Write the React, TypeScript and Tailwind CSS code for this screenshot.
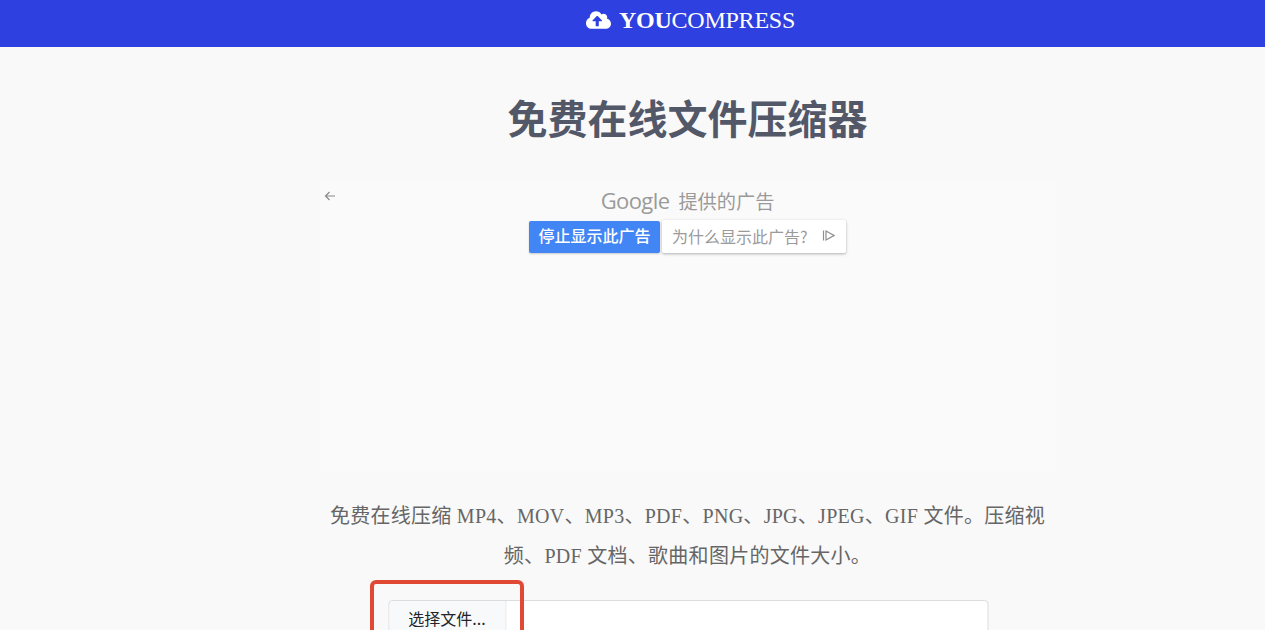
import React from "react";

const serif = "font-['Liberation_Serif','Noto_Sans_CJK_SC',serif]";
const sans = "font-['Noto_Sans_CJK_SC','Liberation_Sans',sans-serif]";

function CloudUpload() {
  return (
    <svg width="25" height="20" viewBox="0 0 640 512" fill="#fff" aria-hidden="true">
      <path d="M537.6 226.6c4.1-10.7 6.4-22.4 6.4-34.6 0-53-43-96-96-96-19.7 0-38.1 6-53.3 16.2C367 64.2 315.3 32 256 32c-88.4 0-160 71.6-160 160 0 2.7.1 5.4.2 8.1C40.2 219.8 0 273.2 0 336c0 79.5 64.5 144 144 144h368c70.7 0 128-57.3 128-128 0-61.9-44-113.6-102.4-125.4zM393.4 288H328v112c0 8.8-7.2 16-16 16h-48c-8.8 0-16-7.2-16-16V288h-65.4c-14.3 0-21.4-17.2-11.3-27.3l105.4-105.4c6.2-6.2 16.4-6.2 22.6 0l105.4 105.4c10.1 10.1 2.9 27.3-11.3 27.3z" />
    </svg>
  );
}

export default function App() {
  return (
    <div className="relative h-[630px] overflow-hidden bg-[#f9f9f9]">
      <header className="flex h-[47px] items-start justify-center bg-[#2f40e0] pl-[116px] pt-[7px]">
        <div className="flex items-center gap-[8px]">
          <CloudUpload />
          <span className={`${serif} text-[24px] leading-[26px] tracking-[-0.25px] text-white`}>
            <b>YOU</b>COMPRESS
          </span>
        </div>
      </header>

      <main className="ml-[320px] flex w-[735px] flex-col items-center">
        <h1 className={`${sans} mt-[42px] text-[40px] font-bold leading-[56px] text-[#535869]`}>
          免费在线文件压缩器
        </h1>

        <section className={`${sans} relative mt-[37px] flex h-[290px] w-full flex-col items-center bg-[#fafafa] pt-[5px]`}>
          <svg className="absolute left-[4px] top-[8px]" width="12" height="12" viewBox="0 0 12 12" fill="none" stroke="#8a8a8a" strokeWidth="1.2">
            <path d="M11 6H1.5M5.5 2 1.5 6l4 4" />
          </svg>
          <div className="flex h-[28px] items-center gap-[9px] text-[#9a9a9a]">
            <span className="mt-[-2px] font-['Open_Sans',sans-serif] text-[22px] leading-[28px] tracking-[-0.6px]">Google</span>
            <span className="text-[19.2px] leading-[28px]">提供的广告</span>
          </div>
          <div className="mt-[5px] flex items-center gap-[2px]">
            <div className="flex h-[32px] w-[131px] items-center justify-center rounded-[2px] bg-[#4285f4] pb-[3px] text-[16px] font-medium text-white shadow-[0_1px_2px_rgba(0,0,0,0.2)]">
              停止显示此广告
            </div>
            <div className="flex h-[33px] w-[184px] items-center gap-[14px] rounded-[2px] bg-white pb-[2px] pl-[10px] text-[16px] text-[#9a9a9a] shadow-[0_1px_3px_rgba(0,0,0,0.3)]">
              <span>为什么显示此广告?</span>
              <svg width="13" height="13" viewBox="0 0 13 13" fill="none" stroke="#8f8f8f" strokeWidth="1.2">
                <path d="M1.5 1.5v10M4 2l8 4.5-8 4.5z" />
              </svg>
            </div>
          </div>
        </section>

        <p className={`${serif} mt-[24px] w-[725px] text-center text-[20px] leading-[40px] tracking-[0.28px] text-[#666666]`}>
          免费在线压缩 MP4、MOV、MP3、PDF、PNG、JPG、JPEG、GIF 文件。压缩视频、PDF 文档、歌曲和图片的文件大小。
        </p>

        <div className="mt-[24px] flex h-[40px] w-[600px] translate-x-[0.5px] rounded-[4px] border border-[#dcdcdc] bg-white">
          <div className={`${sans} flex w-[117px] shrink-0 justify-center rounded-l-[4px] border-r border-[#dcdcdc] bg-[#f8f9fa] pt-[5px] text-[16px] leading-[24px] text-[#212529]`}>
            选择文件...
          </div>
        </div>
      </main>

      <div className="absolute left-[370px] top-[580px] h-[70px] w-[154px] rounded-[6px] border-[4px] border-[#e04a35]" />
    </div>
  );
}
